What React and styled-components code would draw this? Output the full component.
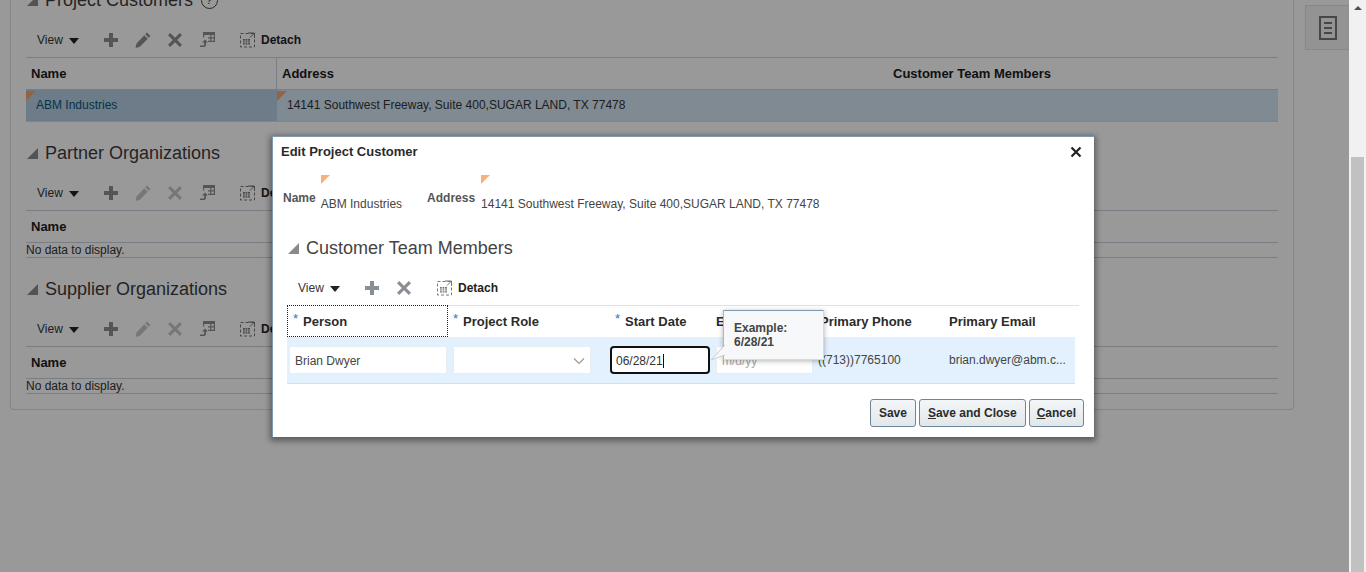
import React from "react";
import styled, { createGlobalStyle } from "styled-components";

const GlobalStyle = createGlobalStyle`
  html, body {
    margin: 0;
    padding: 0;
    height: 572px;
    overflow: hidden;
    background: #fff;
    font-family: "Liberation Sans", Arial, sans-serif;
    color: #333;
  }
`;

const Page = styled.div`
  position: relative;
  display: flex;
  width: 1366px;
  height: 572px;
  overflow: hidden;
`;
const Main = styled.div`
  display: flex;
  align-items: flex-start;
  width: 1349px;
  padding-left: 10px;
  box-sizing: border-box;
`;
const Panel = styled.div`
  width: 1284px;
  height: 410px;
  box-sizing: border-box;
  padding: 0 15px 0 15px;
  border: 1px solid #d6dfe6;
  border-top: none;
  border-radius: 0 0 4px 4px;
`;
const RightTab = styled.div`
  display: flex;
  align-items: center;
  justify-content: center;
  width: 43px;
  height: 43px;
  margin: 5px 0 0 11px;
  border: 1px solid #dfe4e8;
  border-right: none;
  background: #f5f5f5;
`;
const Scrollbar = styled.div`
  position: relative;
  display: flex;
  flex-direction: column;
  align-items: center;
  width: 17px;
  height: 572px;
  background: #f1f1f1;
`;
const ScrollUp = styled.div`
  width: 0;
  height: 0;
  margin-top: 6px;
  border-left: 4px solid transparent;
  border-right: 4px solid transparent;
  border-bottom: 4px solid #505050;
`;
const ScrollThumb = styled.div`
  width: 13px;
  height: 415px;
  margin-top: 147px;
  background: #c1c1c1;
`;
const Overlay = styled.div`
  position: absolute;
  left: 0;
  top: 0;
  width: 1349px;
  height: 572px;
  background: rgba(0, 0, 0, 0.4);
`;

const Section = styled.section`
  margin-top: ${(p) => p.$top}px;
`;
const Heading = styled.div`
  display: flex;
  align-items: center;
  height: 24px;
  padding-left: 1px;
  font-size: 18px;
  color: #3d3d3d;
  white-space: nowrap;
`;
const Disclosure = styled.span`
  width: 0;
  height: 0;
  margin-right: 7px;
  border-left: 11px solid transparent;
  border-bottom: 11px solid #8a8a8a;
`;
const HelpIcon = styled.span`
  display: inline-flex;
  align-items: center;
  justify-content: center;
  width: 17px;
  height: 17px;
  margin-left: 8px;
  box-sizing: border-box;
  border: 1px solid #444;
  border-radius: 50%;
  font-size: 12px;
  font-style: italic;
`;
const Toolbar = styled.div`
  display: flex;
  align-items: center;
  height: 32px;
  margin-top: ${(p) => p.$top || 0}px;
  padding-left: ${(p) => p.$left}px;
`;
const ViewMenu = styled.span`
  display: flex;
  align-items: center;
  width: ${(p) => p.$width}px;
  font-size: 12px;
  color: #333;
`;
const ViewCaret = styled.span`
  width: 0;
  height: 0;
  margin-left: 6px;
  margin-top: 2px;
  border-left: 5px solid transparent;
  border-right: 5px solid transparent;
  border-top: 6px solid #222;
`;
const ToolIcon = styled.svg`
  display: block;
  width: 18px;
  height: 18px;
  margin-right: ${(p) => p.$gap}px;
  fill: ${(p) => (p.$off ? "#c4c8cc" : "#8a8f94")};
`;
const DetachLabel = styled.span`
  margin-left: 5px;
  font-size: 12px;
  font-weight: bold;
  color: #222;
`;

const TableHead = styled.div`
  display: flex;
  height: 31px;
  margin-top: 1px;
  border-top: 1px solid #c9d3db;
  border-bottom: 1px solid #c9d3db;
  box-sizing: content-box;
`;
const HeadCell = styled.div`
  display: flex;
  align-items: center;
  width: ${(p) => p.$width}px;
  padding-left: 5px;
  box-sizing: border-box;
  font-size: 13px;
  font-weight: bold;
  color: #1c1c1c;
  ${(p) => p.$divider && "border-right: 1px solid #c9d3db;"}
`;
const CustomerRow = styled.div`
  display: flex;
  height: 31px;
  background: #d5e6f4;
  border-bottom: 1px solid #d8dee3;
`;
const CustomerCell = styled.div`
  position: relative;
  display: flex;
  align-items: center;
  width: ${(p) => p.$width};
  flex: ${(p) => p.$grow || "none"};
  padding: 0 0 2px 10px;
  box-sizing: border-box;
  font-size: 12px;
  color: ${(p) => (p.$link ? "#04577f" : "#333")};
  background: ${(p) => (p.$picked ? "#b6cfe3" : "transparent")};
`;
const ChangeMark = styled.span`
  position: absolute;
  left: 0;
  top: 1px;
  width: 0;
  height: 0;
  border-top: 10px solid #f7a76f;
  border-right: 10px solid transparent;
`;
const EmptyRow = styled.div`
  height: 14px;
  border-bottom: 1px solid #c9d3db;
  font-size: 12px;
  line-height: 14px;
  color: #333;
`;

const Modal = styled.div`
  position: absolute;
  left: 272px;
  top: 136px;
  width: 822px;
  height: 301px;
  box-sizing: border-box;
  padding: 0 10px 0 8px;
  background: #fff;
  border: 1px solid #7f99ad;
  border-width: 1px 0 0 1px;
  box-shadow: 0 2px 6px 2px rgba(0, 0, 0, 0.4);
`;
const ModalTitleBar = styled.div`
  display: flex;
  align-items: center;
  justify-content: space-between;
  height: 29px;
  font-size: 13px;
  font-weight: bold;
  color: #2b2b2b;
`;
const CloseIcon = styled.svg`
  width: 12px;
  height: 12px;
  margin-right: 2px;
  stroke: #222;
  stroke-width: 2.2;
`;
const FieldRow = styled.div`
  display: flex;
  height: 38px;
  margin-top: 9px;
  padding-left: 2px;
`;
const FieldLabel = styled.span`
  margin: 16px ${(p) => p.$gap}px 0 0;
  font-size: 12px;
  font-weight: bold;
  color: #555;
`;
const FieldValue = styled.span`
  position: relative;
  display: block;
  padding-top: 22px;
  margin-right: ${(p) => p.$gap}px;
  font-size: 12px;
  color: #444;
`;
const ValueMark = styled.span`
  position: absolute;
  left: 0;
  top: 0;
  width: 0;
  height: 0;
  border-top: 9px solid #fbae78;
  border-right: 9px solid transparent;
`;
const ModalHeading = styled(Heading)`
  margin-top: 23px;
  padding-left: 7px;
  color: #444;
`;
const MemberGrid = styled.div`
  display: grid;
  grid-template-columns: 161px 162px 106px 102px 131px 130px;
  width: 792px;
  margin: 1px 0 0 6px;
`;
const MemberHead = styled.div`
  display: flex;
  align-items: center;
  height: 32px;
  padding-left: ${(p) => p.$left}px;
  box-sizing: border-box;
  border-top: 1px solid #dbe3ea;
  font-size: 13px;
  font-weight: bold;
  color: #2b2b2b;
  white-space: nowrap;
  overflow: hidden;
  ${(p) => p.$focused && "border: 1px dotted #222;"}
`;
const Star = styled.span`
  align-self: flex-start;
  margin: 5px 5px 0 0;
  font-size: 13px;
  font-weight: normal;
  color: #1d78c1;
`;
const MemberCell = styled.div`
  display: flex;
  align-items: center;
  height: 47px;
  padding-left: ${(p) => p.$left}px;
  box-sizing: border-box;
  background: #e3f1fe;
  border-bottom: 1px solid #dcdfe2;
  font-size: 12px;
  color: #444;
  ${(p) => p.$last && "margin-right: 4px;"}
`;
const Input = styled.div`
  display: flex;
  align-items: center;
  justify-content: space-between;
  width: ${(p) => p.$width}px;
  height: 28px;
  padding: 1px 5px 0;
  box-sizing: border-box;
  background: #fff;
  border: 1px solid #e6edf3;
  font-size: 12px;
  color: ${(p) => (p.$hint ? "#aaa" : "#444")};
`;
const FocusInput = styled(Input)`
  border: 2px solid #111;
  border-radius: 4px;
  padding: 1px 4px 0;
  justify-content: flex-start;
  color: #333;
`;
const Caret = styled.span`
  width: 1px;
  height: 14px;
  background: #111;
`;
const Tooltip = styled.div`
  position: absolute;
  left: 450px;
  top: 173px;
  width: 101px;
  height: 50px;
  padding: 10px 10px;
  box-sizing: border-box;
  background: #f6f8f9;
  border: 1px solid #d4dbe0;
  border-top-color: #7f99ad;
  border-left-color: #a8b9c6;
  box-shadow: 0 1px 5px rgba(0, 0, 0, 0.3);
  font-size: 12px;
  font-weight: bold;
  line-height: 14px;
  color: #444;
`;
const TooltipTail = styled.svg`
  position: absolute;
  left: -13px;
  top: 33px;
  width: 14px;
  height: 17px;
`;
const Buttons = styled.div`
  display: flex;
  justify-content: flex-end;
  gap: 3px;
  margin-top: 15px;
`;
const Button = styled.button`
  height: 28px;
  padding: 0 ${(p) => p.$pad}px;
  background: linear-gradient(#f3f6f8, #e2e7ea);
  border: 1px solid #6d8598;
  border-radius: 3px;
  font-family: inherit;
  font-size: 12px;
  font-weight: bold;
  color: #2b2b2b;
  u { text-underline-offset: 1px; }
`;

const Plus = ({ gap, off }) => (
  <ToolIcon viewBox="0 0 18 18" $gap={gap} $off={off}>
    <path d="M7 2h4v5h5v4h-5v5H7v-5H2V7h5z" />
  </ToolIcon>
);
const Pencil = ({ gap, off }) => (
  <ToolIcon viewBox="0 0 18 18" $gap={gap} $off={off}>
    <path d="M13 1.5l3.5 3.5-1.8 1.8-3.5-3.5zM10.3 4.2l3.5 3.5-8 8L1.5 17l1-4.5z" />
  </ToolIcon>
);
const Cross = ({ gap, off }) => (
  <ToolIcon viewBox="0 0 18 18" $gap={gap} $off={off}>
    <path d="M4.2 2L9 6.8 13.8 2 16 4.2 11.2 9l4.8 4.8-2.2 2.2L9 11.2 4.2 16 2 13.8 6.8 9 2 4.2z" />
  </ToolIcon>
);
const Freeze = ({ gap }) => (
  <ToolIcon viewBox="0 0 18 18" $gap={gap}>
    <path d="M5 1h12v10h-7v-1.2h2.2V7.5H10V6.3h2.2V4H6.2v2.5H5zM13.4 4v2.3h2.4V4zM13.4 7.5v2.3h2.4V7.5z" />
    <path d="M7 8.5l3 3H8v2.6c0 1-.7 1.9-1.8 1.9H2v-1.6h3.6c.4 0 .6-.2.6-.6V11.500H4z" />
  </ToolIcon>
);
const DetachIcon = () => (
  <svg width="16" height="16" viewBox="0 0 16 16">
    <rect x="0.5" y="1.5" width="14" height="13.5" fill="none" stroke="#777" strokeDasharray="3 2" />
    <path d="M8 1h6.500v5M14.500 1L10 5.500" fill="none" stroke="#777" />
    <path d="M3 7h7v5.500H3z" fill="#777" />
    <path d="M3 9h7M3 10.800h7M5.300 7v5.500M7.600 7v5.500" stroke="#fff" strokeWidth="0.7" />
  </svg>
);

const PageToolbar = ({ off }) => (
  <Toolbar $left={11} $top={12}>
    <ViewMenu $width={65}>
      View
      <ViewCaret />
    </ViewMenu>
    <Plus gap={14} />
    <Pencil gap={14} off={off} />
    <Cross gap={14} off={off} />
    <Freeze gap={24} />
    <DetachIcon />
    <DetachLabel>Detach</DetachLabel>
  </Toolbar>
);

const EmptySection = ({ title }) => (
  <Section $top={19}>
    <Heading>
      <Disclosure />
      {title}
    </Heading>
    <PageToolbar off />
    <TableHead>
      <HeadCell $width={250}>Name</HeadCell>
    </TableHead>
    <EmptyRow>No data to display.</EmptyRow>
  </Section>
);

export default function App() {
  return (
    <Page>
      <GlobalStyle />
      <Main>
        <Panel>
          <Section $top={-12}>
            <Heading>
              <Disclosure />
              Project Customers
              <HelpIcon>?</HelpIcon>
            </Heading>
            <PageToolbar />
            <TableHead>
              <HeadCell $width={251} $divider>Name</HeadCell>
              <HeadCell $width={611}>Address</HeadCell>
              <HeadCell $width={380}>Customer Team Members</HeadCell>
            </TableHead>
            <CustomerRow>
              <CustomerCell $width="251px" $link $picked>
                <ChangeMark />
                ABM Industries
              </CustomerCell>
              <CustomerCell $grow="1">
                <ChangeMark />
                14141 Southwest Freeway, Suite 400,SUGAR LAND, TX 77478
              </CustomerCell>
            </CustomerRow>
          </Section>
          <EmptySection title="Partner Organizations" />
          <EmptySection title="Supplier Organizations" />
        </Panel>
        <RightTab>
          <svg width="18" height="24" viewBox="0 0 18 24">
            <rect x="1" y="1" width="16" height="22" fill="none" stroke="#777" strokeWidth="2" />
            <path d="M5 7h8M5 12h8M5 17h8" stroke="#777" strokeWidth="2" />
          </svg>
        </RightTab>
      </Main>
      <Scrollbar>
        <ScrollUp />
        <ScrollThumb />
      </Scrollbar>
      <Overlay />
      <Modal>
        <ModalTitleBar>
          Edit Project Customer
          <CloseIcon viewBox="0 0 12 12">
            <path d="M1.500 1.500l9 9M10.500 1.500l-9 9" />
          </CloseIcon>
        </ModalTitleBar>
        <FieldRow>
          <FieldLabel $gap={5}>Name</FieldLabel>
          <FieldValue $gap={25}>
            <ValueMark />
            ABM Industries
          </FieldValue>
          <FieldLabel $gap={6}>Address</FieldLabel>
          <FieldValue $gap={0}>
            <ValueMark />
            14141 Southwest Freeway, Suite 400,SUGAR LAND, TX 77478
          </FieldValue>
        </FieldRow>
        <ModalHeading>
          <Disclosure />
          Customer Team Members
        </ModalHeading>
        <Toolbar $left={17} $top={12}>
          <ViewMenu $width={65}>
            View
            <ViewCaret />
          </ViewMenu>
          <Plus gap={14} />
          <Cross gap={24} />
          <DetachIcon />
          <DetachLabel>Detach</DetachLabel>
        </Toolbar>
        <MemberGrid>
          <MemberHead $left={5} $focused><Star>*</Star>Person</MemberHead>
          <MemberHead $left={5}><Star>*</Star>Project Role</MemberHead>
          <MemberHead $left={5}><Star>*</Star>Start Date</MemberHead>
          <MemberHead $left={0}>End Date</MemberHead>
          <MemberHead $left={2}>Primary Phone</MemberHead>
          <MemberHead $left={0}>Primary Email</MemberHead>
          <MemberCell $left={2}><Input $width={158}>Brian Dwyer</Input></MemberCell>
          <MemberCell $left={5}>
            <Input $width={138}>
              <span />
              <svg width="12" height="8" viewBox="0 0 12 8">
                <path d="M1 1.500l5 5 5-5" fill="none" stroke="#999" strokeWidth="1.200" />
              </svg>
            </Input>
          </MemberCell>
          <MemberCell $left={0}>
            <FocusInput $width={100}>06/28/21<Caret /></FocusInput>
          </MemberCell>
          <MemberCell $left={0}><Input $width={97} $hint>m/d/yy</Input></MemberCell>
          <MemberCell $left={0}>((713))7765100</MemberCell>
          <MemberCell $left={0} $last>brian.dwyer@abm.c...</MemberCell>
        </MemberGrid>
        <Buttons>
          <Button $pad={8}>Save</Button>
          <Button $pad={8}><u>S</u>ave and Close</Button>
          <Button $pad={7}><u>C</u>ancel</Button>
        </Buttons>
        <Tooltip>
          Example:
          <br />
          6/28/21
          <TooltipTail viewBox="0 0 14 17">
            <path d="M14 1L0 16l14-5" fill="#f6f8f9" stroke="#c5ced5" />
          </TooltipTail>
        </Tooltip>
      </Modal>
    </Page>
  );
}
